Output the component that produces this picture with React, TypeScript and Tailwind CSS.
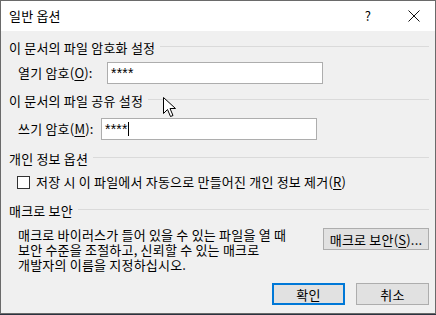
import type { ReactNode } from 'react'

function GroupHeader({ title }: { title: string }) {
  return (
    <div className="flex items-start h-[16px]">
      <span className="whitespace-nowrap leading-[16px]">{title}</span>
      <div className="flex-1 h-px bg-[#dadada] ml-[5px] mt-[6px]" />
    </div>
  )
}

function Mnemonic({ ch }: { ch: string }) {
  return (
    <>
      (<span className="underline underline-offset-2">{ch}</span>)
    </>
  )
}

function Button({ children, primary = false, className = '' }: { children: ReactNode; primary?: boolean; className?: string }) {
  return (
    <button
      type="button"
      className={`h-[22px] bg-[#e1e1e1] flex items-center justify-center leading-none whitespace-nowrap ${
        primary ? 'border-2 border-[#0078d7]' : 'border border-[#adadad]'
      } ${className}`}
    >
      {children}
    </button>
  )
}

function Cursor() {
  return (
    <svg className="absolute left-[163px] top-[97px]" width="13" height="21" viewBox="0 0 13 21">
      <path
        d="M0.5 0.5 L0.5 16.5 L4.5 12.5 L7.5 19.5 L10 18.5 L7 11.5 L12.5 11.5 Z"
        fill="#fff"
        stroke="#000"
        strokeWidth="1"
        strokeLinejoin="miter"
      />
    </svg>
  )
}

const lines = [
  '매크로 바이러스가 들어 있을 수 있는 파일을 열 때',
  '보안 수준을 조절하고, 신뢰할 수 있는 매크로',
  '개발자의 이름을 지정하십시오.',
]

export default function App() {
  return (
    <div className="w-[436px] h-[315px] bg-[#2b3340] text-black text-[13px] tracking-[0.2px] font-['Malgun_Gothic','Noto_Sans_CJK_KR',sans-serif] relative">
      <div className="h-[314px] border border-[#6a6a6a] bg-[#f0f0f0] flex flex-col">
        <div className="h-[30px] bg-white flex items-center pl-[8px] shrink-0">
          <span className="leading-none -mt-[1px]">일반 옵션</span>
          <span className="ml-auto text-[13px] leading-none -mt-[2px]">?</span>
          <svg className="ml-[37px] mr-[15px]" width="12" height="12" viewBox="0 0 12 12">
            <path d="M0.5 0.5 L11.5 11.5 M11.5 0.5 L0.5 11.5" stroke="#111" strokeWidth="1" />
          </svg>
        </div>

        <div className="flex flex-col pl-[8px] pr-[6px] pt-[9px]">
          <GroupHeader title="이 문서의 파일 암호화 설정" />
          <div className="flex items-center h-[22px] mt-[6px]">
            <span className="w-[98px] pl-[9px] shrink-0 whitespace-nowrap">
              열기 암호<Mnemonic ch="O" />:
            </span>
            <div className="w-[216px] h-[22px] bg-white border border-[#adadad] flex items-start pl-[3px]">
              <span className="text-[14px] leading-none mt-[3px] font-['Liberation_Sans',sans-serif]">****</span>
            </div>
          </div>

          <div className="mt-[9px]">
            <GroupHeader title="이 문서의 파일 공유 설정" />
          </div>
          <div className="flex items-center h-[22px] mt-[9px]">
            <span className="w-[92px] pl-[9px] shrink-0 whitespace-nowrap">
              쓰기 암호<Mnemonic ch="M" />:
            </span>
            <div className="w-[216px] h-[22px] bg-white border border-[#adadad] flex items-start pl-[3px]">
              <span className="text-[14px] leading-none mt-[3px] font-['Liberation_Sans',sans-serif]">****</span>
              <span className="w-px h-[14px] bg-black mt-[3px]" />
            </div>
          </div>

          <div className="mt-[11px]">
            <GroupHeader title="개인 정보 옵션" />
          </div>
          <div className="flex items-center h-[16px] mt-[7px] pl-[8px]">
            <span className="w-[13px] h-[13px] border border-[#333] bg-white shrink-0" />
            <span className="ml-[6px] whitespace-nowrap">
              저장 시 이 파일에서 자동으로 만들어진 개인 정보 제거<Mnemonic ch="R" />
            </span>
          </div>

          <div className="mt-[13px]">
            <GroupHeader title="매크로 보안" />
          </div>
          <div className="flex items-start mt-[8px]">
            <div className="pl-[9px] flex flex-col">
              {lines.map((l) => (
                <span key={l} className="h-[15px] leading-[15px] whitespace-nowrap">
                  {l}
                </span>
              ))}
            </div>
            <Button className="ml-auto mt-[1px] w-[106px]">
              매크로 보안<Mnemonic ch="S" />...
            </Button>
          </div>

          <div className="flex justify-end gap-[11px] mt-[11px]">
            <Button primary className="w-[73px]">확인</Button>
            <Button className="w-[73px]">취소</Button>
          </div>
        </div>
      </div>
      <Cursor />
    </div>
  )
}
